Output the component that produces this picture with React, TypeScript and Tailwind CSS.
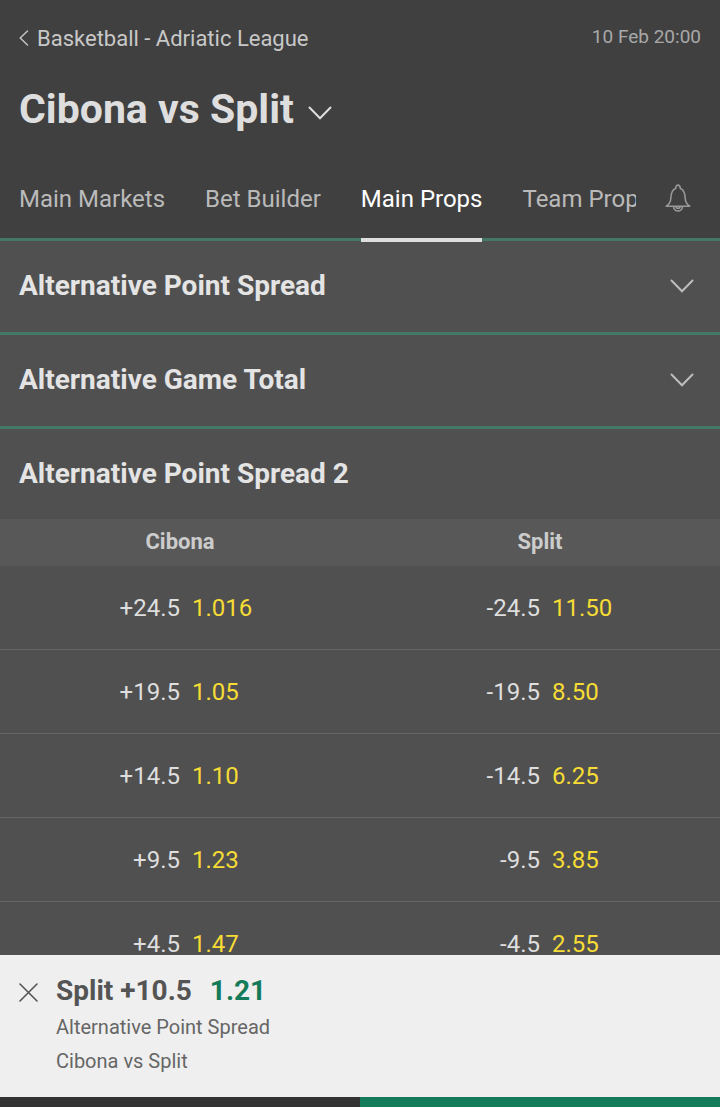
import React, { useState } from 'react'

interface Selection {
  line: string
  odds: string
}

const TABS = ['Main Markets', 'Bet Builder', 'Main Props', 'Team Props']

const COLLAPSED_MARKETS = ['Alternative Point Spread', 'Alternative Game Total']

const SPREADS: { home: Selection; away: Selection }[] = [
  { home: { line: '+24.5', odds: '1.016' }, away: { line: '-24.5', odds: '11.50' } },
  { home: { line: '+19.5', odds: '1.05' }, away: { line: '-19.5', odds: '8.50' } },
  { home: { line: '+14.5', odds: '1.10' }, away: { line: '-14.5', odds: '6.25' } },
  { home: { line: '+9.5', odds: '1.23' }, away: { line: '-9.5', odds: '3.85' } },
  { home: { line: '+4.5', odds: '1.47' }, away: { line: '-4.5', odds: '2.55' } },
]

function ChevronDown({ className }: { className: string }) {
  return (
    <svg className={className} width="24" height="14" viewBox="0 0 24 14" fill="none" stroke="currentColor" strokeWidth="2" strokeLinecap="round" aria-hidden="true">
      <path d="M1.5 1.5 12 12.3 22.5 1.5" />
    </svg>
  )
}

function BellIcon() {
  return (
    <svg width="26" height="28" viewBox="0 0 26 28" fill="none" stroke="currentColor" strokeWidth="1.6" strokeLinejoin="round" aria-hidden="true">
      <path d="M1.2 22.2c2.6-1.6 4.4-4 4.600-8 .2-5.500 1.400-8.600 4.800-9.800.3-2 1-3.400 2.400-3.400s2.100 1.400 2.400 3.400c3.400 1.200 4.600 4.300 4.800 9.800.2 4 2 6.400 4.600 8z" />
      <path d="M8.600 22.400a4.400 4.600 0 0 0 8.800 0M11 22.400a2 1.800 0 0 0 4 0" />
    </svg>
  )
}

function OddsButton({ selection }: { selection: Selection }) {
  return (
    <button className="grid grid-cols-2 gap-3 items-center w-full h-[83px] pl-3 text-2xl">
      <span className="text-right text-[#dedede]">{selection.line}</span>
      <span className="text-left text-[#f6dc35]">{selection.odds}</span>
    </button>
  )
}

function Header() {
  const [active, setActive] = useState('Main Props')

  return (
    <header className="relative z-10 shrink-0 bg-[#404040] border-b-3 border-[#447866]">
      <div className="flex items-center justify-between px-[19px] pt-5">
        <a href="#league" className="flex items-center gap-2 h-9 text-[22px] text-[#c8c8c8]">
          <svg width="10" height="16" viewBox="0 0 10 16" fill="none" stroke="currentColor" strokeWidth="1.4" strokeLinecap="round" aria-hidden="true">
            <path d="M8.500 1 1.200 8l7.300 7" />
          </svg>
          Basketball - Adriatic League
        </a>
        <time className="pb-0.5 text-[19px] text-[#a8a8a8]">10 Feb 20:00</time>
      </div>
      <h1 className="px-[19px] pt-6">
        <button className="flex items-center gap-3.5 h-[60px] text-[41px] font-bold text-[#dedede]">
          Cibona vs Split
          <ChevronDown className="mt-1.5" />
        </button>
      </h1>
      <div className="flex items-start pt-4">
        <nav className="relative z-10 flex flex-1 gap-10 h-[86px] ml-[19px] -mb-1 overflow-x-auto [scrollbar-width:none]">
          {TABS.map(tab => (
            <button
              key={tab}
              onClick={() => setActive(tab)}
              className={`shrink-0 h-full pt-1 border-b-4 whitespace-nowrap text-2xl ${
                tab === active ? 'text-white border-[#dedede]' : 'text-[#bababa] border-transparent'
              }`}
            >
              {tab}
            </button>
          ))}
        </nav>
        <button aria-label="Notifications" className="flex items-center justify-center w-[84px] h-[82px] pt-0.5 text-[#999999]">
          <BellIcon />
        </button>
      </div>
    </header>
  )
}

function BetSlip() {
  return (
    <aside className="shrink-0">
      <div className="flex gap-[18px] h-[142px] px-[19px] pt-4 bg-[#efefef]">
        <button aria-label="Remove selection" className="flex items-center h-[42px] text-[#545454]">
          <svg width="19" height="19" viewBox="0 0 19 19" fill="none" stroke="currentColor" strokeWidth="1.600" strokeLinecap="round" aria-hidden="true">
            <path d="m1 1 17 17M18 1 1 18" />
          </svg>
        </button>
        <div className="text-xl text-[#666666]">
          <div className="flex gap-[18px] h-[39px] text-[28px] leading-10 font-bold">
            <span className="text-[#545454]">Split +10.5</span>
            <span className="text-[#147b5a]">1.21</span>
          </div>
          <div className="leading-[34px]">Alternative Point Spread</div>
          <div className="leading-[34px]">Cibona vs Split</div>
        </div>
      </div>
      <div className="grid grid-cols-2 h-[10px]">
        <button aria-label="Set stake" className="bg-[#333333]" />
        <button aria-label="Place bet" className="bg-[#147b5a]" />
      </div>
    </aside>
  )
}

export default function App() {
  return (
    <div className="flex flex-col h-screen bg-[#505050] font-['Roboto',sans-serif]">
      <Header />
      <main className="flex-1 min-h-0 overflow-y-auto [scrollbar-width:none]">
        {COLLAPSED_MARKETS.map(name => (
          <h2 key={name} className="border-b-3 border-[#447866]">
            <button className="flex items-center justify-between w-full h-[91px] pb-px pl-[19px] pr-[26px] text-[28px] font-bold text-[#e4e4e4]">
              {name}
              <ChevronDown className="text-[#bdbdbd]" />
            </button>
          </h2>
        ))}
        <h2 className="flex items-center h-[90px] px-[19px] text-[28px] font-bold text-[#e4e4e4]">
          Alternative Point Spread 2
        </h2>
        <table className="w-full table-fixed border-collapse">
          <thead>
            <tr className="h-[47px] bg-[#585858] text-[22px] text-[#cccccc]">
              <th scope="col" className="p-0 pb-0.5 font-bold">Cibona</th>
              <th scope="col" className="p-0 pb-0.5 font-bold">Split</th>
            </tr>
          </thead>
          <tbody>
            {SPREADS.map(({ home, away }) => (
              <tr key={home.line} className="border-b border-[#646464]">
                <td className="p-0"><OddsButton selection={home} /></td>
                <td className="p-0"><OddsButton selection={away} /></td>
              </tr>
            ))}
          </tbody>
        </table>
      </main>
      <BetSlip />
    </div>
  )
}
